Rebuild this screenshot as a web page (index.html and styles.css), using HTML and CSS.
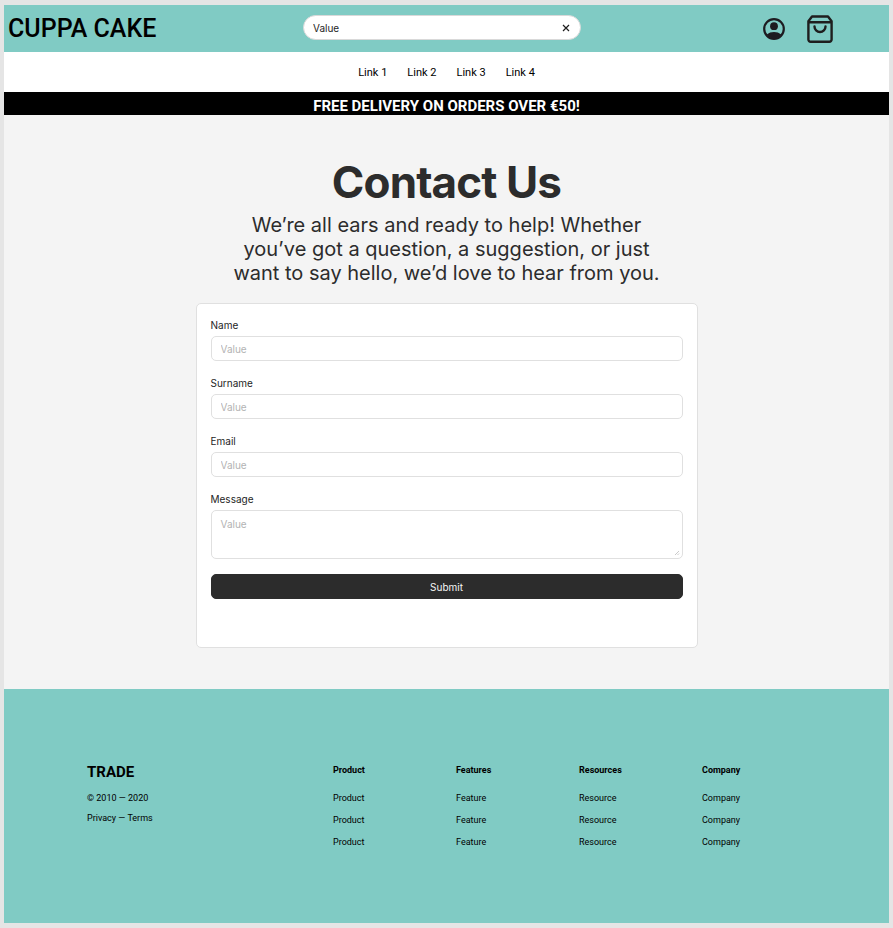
FILE: index.html
```html
<!DOCTYPE html>
<html lang="en">
<head>
<meta charset="utf-8">
<meta name="viewport" content="width=device-width, initial-scale=1">
<title>Contact Us – Cuppa Cake</title>
<link rel="stylesheet" href="styles.css">
</head>
<body>
<div class="page">
  <header class="header">
    <a class="logo" href="#">CUPPA CAKE</a>
    <form class="search">
      <input class="search-input" type="text" value="Value" aria-label="Search">
      <button class="search-clear" type="reset" aria-label="Clear search">
        <svg width="8" height="8" viewBox="0 0 8 8" fill="none" stroke="#1e1e1e" stroke-width="1.2"><path d="M1 1l6 6M7 1L1 7"/></svg>
      </button>
    </form>
    <div class="actions">
      <a class="action" href="#" aria-label="Account">
        <svg width="22" height="22" viewBox="0 0 22 22"><circle cx="11" cy="11" r="9.800" fill="none" stroke="#1d1b20" stroke-width="2.200"/><circle cx="11" cy="8.2" r="3.9" fill="#1d1b20"/><path d="M3.8 16.6C5.800 14.900 8.300 14.100 11 14.100s5.200.8 7.200 2.500A10 10 0 0 1 11 21a10 10 0 0 1-7.200-4.400z" fill="#1d1b20"/></svg>
      </a>
      <a class="action" href="#" aria-label="Shopping bag">
        <svg width="26" height="28" viewBox="0 0 26 28" fill="none" stroke="#1e1e1e" stroke-width="2.400" stroke-linecap="round" stroke-linejoin="round"><path d="M5 1.500h16l3.600 4.800v18.200a2.200 2.200 0 0 1-2.200 2.200H3.600a2.200 2.200 0 0 1-2.200-2.200V6.300zM1.400 7.200h23.200M7.500 11.500a5.500 5.500 0 0 0 11 0"/></svg>
      </a>
    </div>
  </header>
  <nav class="nav" aria-label="Main">
    <a href="#">Link 1</a>
    <a href="#">Link 2</a>
    <a href="#">Link 3</a>
    <a href="#">Link 4</a>
  </nav>
  <p class="banner">FREE DELIVERY ON ORDERS OVER €50!</p>
  <main class="main">
    <h1 class="title">Contact Us</h1>
    <p class="subtitle">We’re all ears and ready to help! Whether you’ve got a question, a suggestion, or just want to say hello, we’d love to hear from you.</p>
    <form class="card">
      <div class="field">
        <label for="name">Name</label>
        <input id="name" type="text" placeholder="Value">
      </div>
      <div class="field">
        <label for="surname">Surname</label>
        <input id="surname" type="text" placeholder="Value">
      </div>
      <div class="field">
        <label for="email">Email</label>
        <input id="email" type="email" placeholder="Value">
      </div>
      <div class="field">
        <label for="message">Message</label>
        <div class="textarea-wrap">
          <textarea id="message" placeholder="Value"></textarea>
          <svg class="grip" width="6" height="6" viewBox="0 0 6 6" stroke="#b3b3b3" stroke-width="0.700" fill="none"><path d="M1 5l4-4M3.500 5L5 3.500"/></svg>
        </div>
      </div>
      <button class="submit" type="submit">Submit</button>
    </form>
  </main>
  <footer class="footer">
    <section class="brand">
      <h2>TRADE</h2>
      <p>© 2010 — 2020</p>
      <p><a href="#">Privacy</a> — <a href="#">Terms</a></p>
    </section>
    <section class="column">
      <h3>Product</h3>
      <a href="#">Product</a>
      <a href="#">Product</a>
      <a href="#">Product</a>
    </section>
    <section class="column">
      <h3>Features</h3>
      <a href="#">Feature</a>
      <a href="#">Feature</a>
      <a href="#">Feature</a>
    </section>
    <section class="column">
      <h3>Resources</h3>
      <a href="#">Resource</a>
      <a href="#">Resource</a>
      <a href="#">Resource</a>
    </section>
    <section class="column">
      <h3>Company</h3>
      <a href="#">Company</a>
      <a href="#">Company</a>
      <a href="#">Company</a>
    </section>
  </footer>
</div>
</body>
</html>
```
FILE: styles.css
```css
* {
  box-sizing: border-box;
}

body {
  margin: 0;
  padding: 5px 4px;
  background: #e5e5e5;
  color: #000;
  font-family: Roboto, sans-serif;
}

h1, h2, h3, p {
  margin: 0;
}

a {
  color: inherit;
  text-decoration: none;
}

input, textarea, button {
  font: 10px/14px Inter, sans-serif;
  margin: 0;
}

.page {
  display: flex;
  flex-direction: column;
  min-height: calc(100vh - 10px);
  background: #f4f4f4;
}

.header {
  display: grid;
  grid-template-columns: 1fr minmax(0, 278px) 1fr;
  align-items: center;
  height: 47px;
  padding: 0 13px 0 4px;
  background: #80cbc4;
}

.logo {
  font-size: 25px;
  font-weight: 500;
  line-height: 30px;
  white-space: nowrap;
}

.search {
  display: flex;
  align-items: center;
  height: 25px;
  padding: 0 10px 0 9px;
  margin-bottom: 2px;
  border: 1px solid #d9d9d9;
  border-radius: 13px;
  background: #fff;
}

.search-input {
  flex: 1;
  min-width: 0;
  padding: 0;
  border: 0;
  outline: 0;
  background: none;
  color: #1e1e1e;
}

.search-clear {
  display: flex;
  padding: 0;
  border: 0;
  background: none;
}

.actions {
  display: flex;
  justify-content: flex-end;
  align-items: center;
  gap: 22px;
  padding-right: 43px;
}

.action,
.action svg {
  display: block;
}

.nav {
  display: flex;
  justify-content: center;
  align-items: center;
  gap: 20px;
  padding-top: 1px;
  height: 40px;
  background: #fff;
  font-size: 11px;
  line-height: 16px;
}

.banner {
  padding: 6px 8px 0;
  background: #000;
  color: #fff;
  font-size: 15px;
  font-weight: 700;
  line-height: 17px;
  text-align: center;
}

.main {
  display: flex;
  flex-direction: column;
  align-items: center;
  flex: 1;
  padding: 41px 16px;
  color: #2c2c2c;
  font-family: Inter, sans-serif;
}

.title {
  font-size: 44px;
  font-weight: 700;
  line-height: 53px;
  letter-spacing: -0.02em;
}

.subtitle {
  max-width: 440px;
  margin: 4px 0 18px;
  font-size: 20px;
  line-height: 24px;
  text-align: center;
}

.card {
  display: flex;
  flex-direction: column;
  gap: 15px;
  width: 100%;
  max-width: 502px;
  padding: 14px 14px 48px;
  border: 1px solid #e0e0e0;
  border-radius: 5px;
  background: #fff;
}

.field {
  display: flex;
  flex-direction: column;
  gap: 4px;
  color: #1e1e1e;
  font-size: 10px;
  line-height: 14px;
}

.field input,
.field textarea {
  display: block;
  width: 100%;
  height: 25px;
  padding: 0 9px;
  border: 1px solid #e0e0e0;
  border-radius: 5px;
  outline: 0;
  background: #fff;
  color: #1e1e1e;
}

.field textarea {
  height: 49px;
  padding: 6px 9px;
  resize: none;
}

.field ::placeholder {
  color: #b3b3b3;
  opacity: 1;
}

.textarea-wrap {
  position: relative;
}

.grip {
  position: absolute;
  right: 3px;
  bottom: 3px;
}

.submit {
  height: 25px;
  padding: 0;
  border: 1px solid #2c2c2c;
  border-radius: 5px;
  background: #2c2c2c;
  color: #f5f5f5;
}

.footer {
  display: grid;
  grid-template-columns: 2fr 1fr 1fr 1fr 1fr;
  padding: 73px 64px 75px 83px;
  background: #80cbc4;
  font-size: 9px;
  line-height: 12px;
}

.brand {
  display: flex;
  flex-direction: column;
  gap: 8px;
}

.brand h2 {
  margin-bottom: 2px;
  font-size: 15px;
  font-weight: 700;
  line-height: 20px;
}

.column {
  display: flex;
  flex-direction: column;
  gap: 10px;
}

.column h3 {
  margin: 2px 0 6px;
  font-size: 9px;
  font-weight: 700;
}
```
